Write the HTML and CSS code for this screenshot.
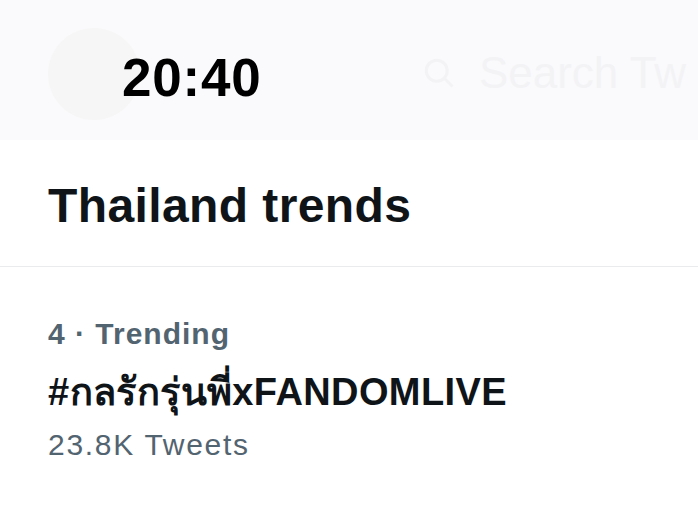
FILE: index.html
```html
<!DOCTYPE html>
<html>
<head>
	<title>Thailand trends</title>
	<link rel="stylesheet" href="styles.css">
</head>
<body>
	<div id="top-bar">
		<div class="avatar"></div>
		<div class="clock">20:40</div>
		<div class="search">
			<svg viewBox="0 0 24 24" width="36" height="36"><circle cx="10.5" cy="10.5" r="7" fill="none" stroke="currentColor" stroke-width="2"/><path d="M15.5 15.5 L21 21" stroke="currentColor" stroke-width="2"/></svg>
			<span>Search Tw</span>
		</div>
	</div>
	<h1 class="section-title">Thailand trends</h1>
	<div class="trend">
		<div class="trend-meta">4 · Trending</div>
		<div class="trend-name">#กลรักรุ่นพี่xFANDOMLIVE</div>
		<div class="trend-count">23.8K Tweets</div>
	</div>
</body>
</html>
```

FILE: styles.css
```css
body {
	margin: 0;
	background: #fff;
	font-family: "Liberation Sans", Arial, sans-serif;
	color: #0f1419;
}
#top-bar {
	position: relative;
	height: 140px;
	display: flex;
	align-items: center;
	background: #fafafc;
}
.avatar {
	position: absolute;
	left: 48px;
	top: 28px;
	width: 92px;
	height: 92px;
	border-radius: 50%;
	background: #f6f6f6;
}
.clock {
	position: relative;
	margin-left: 122px;
	margin-top: 14px;
	font-size: 53px;
	font-weight: bold;
	color: #000;
	letter-spacing: 0.8px;
}
.search {
	display: flex;
	align-items: center;
	gap: 22px;
	margin-left: auto;
	margin-right: 12px;
	margin-top: 6px;
	color: #f3f3f6;
	font-size: 44px;
	white-space: nowrap;
}
.section-title {
	margin: 0;
	padding: 38px 48px 0;
	height: 88px;
	font-size: 48px;
	font-weight: bold;
	letter-spacing: 0.4px;
	border-bottom: 1px solid #e9ebec;
}
.trend {
	padding: 50px 48px 0;
}
.trend-meta {
	font-size: 30px;
	font-weight: bold;
	color: #536471;
	letter-spacing: 1px;
	line-height: 34px;
}
.trend-name {
	margin-top: 20px;
	font-size: 38px;
	font-weight: bold;
	letter-spacing: 0.4px;
	line-height: 42px;
}
.trend-count {
	margin-top: 15px;
	font-size: 30px;
	color: #536471;
	letter-spacing: 1.7px;
	line-height: 34px;
}
```
